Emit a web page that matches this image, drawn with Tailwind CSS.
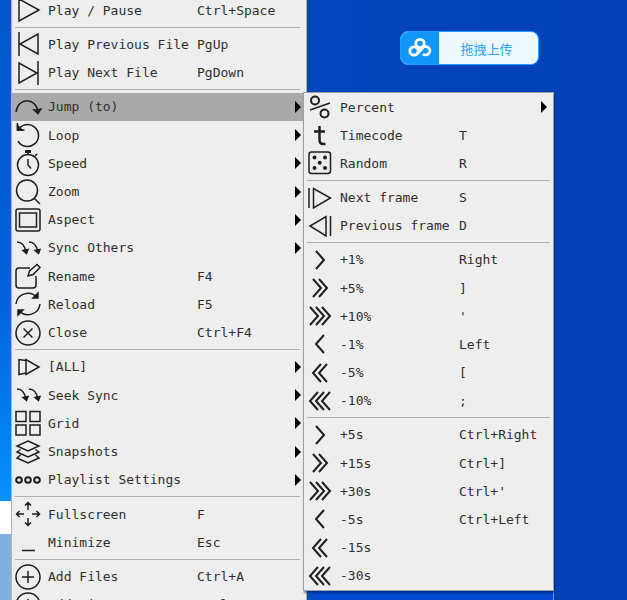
<!DOCTYPE html>
<html lang="en">
<head>
  <meta charset="UTF-8" />
  <title>Player Menu</title>
  <meta name="viewport" content="width=device-width, initial-scale=1.0" />
  <script src="https://cdn.jsdelivr.net/npm/@tailwindcss/browser@4"></script>
</head>
<body class="relative h-screen overflow-hidden bg-linear-to-r from-[#0446be] from-50% to-[#0340b6] font-['DejaVu_Sans_Mono',monospace] text-[13px] leading-none text-[#2e2e2e]">

  <!-- desktop strip left of the menu -->
  <div class="absolute inset-y-0 left-0 flex w-3 flex-col">
    <div class="grow bg-linear-to-b from-[#0055cc] via-[#0062dc] via-60% to-[#0a90ff]"></div>
    <div class="h-[33px] bg-white"></div>
    <div class="h-[66px] bg-[#7fb0e0]"></div>
  </div>

  <!-- brighter desktop edge under the submenu -->
  <div class="absolute bottom-0 left-[307px] h-3 w-[247px] border-r border-[#8c9cb4] bg-[#004ad0]"></div>

  <!-- upload widget -->
  <button class="absolute left-[400px] top-[31px] flex h-[34px] w-[139px] overflow-hidden rounded-lg border border-[#1c9cff] bg-[#eef9ff] font-['Noto_Sans_CJK_SC',sans-serif] text-[13px] text-[#2ba4f5]">
    <span class="flex h-full w-[38px] items-center justify-center bg-[#1296fb]">
      <svg class="size-6" viewBox="0 0 24 24" fill="none" stroke="#fff" stroke-width="2.8"><circle cx="12" cy="7.5" r="4.2"/><circle cx="6" cy="15" r="4.2"/><path d="M9 18l5.500-6a4.200 4.200 0 1 1 .5 6"/></svg>
    </span>
    <span class="flex h-full grow items-center justify-center pr-1">拖拽上传</span>
  </button>

  <div id="menu" role="menu" class="absolute -top-1 -bottom-[19px] left-[11px] flex w-[296px] flex-col border-x border-[#b4b4b4] bg-[#eeeeee] pr-[3px]"></div>
  <div id="submenu" role="menu" class="absolute top-[92px] bottom-[9px] left-[303px] flex w-[251px] flex-col border border-[#a0a0a0] bg-[#eeeeee] shadow-[1px_2px_2px_#00226699]"></div>

  <script>
    const icons = {
      play: '<path d="M5 3v22l20-11z"/>',
      prev: '<path d="M5 2v24M24 4v20L6 14z"/>',
      next: '<path d="M24 2v24M5 4v20l18-10z"/>',
      jump: '<path d="M2 19C4 4 22 4 24 19"/><path d="M20 17l4 3.500 3-4.500-3.500 1z" fill="currentColor"/>',
      loop: '<path d="M4 9a11 11 0 1 1 0 11"/><path d="M3.500 2v7h7"/><path d="M3.500 4.500V9H8z" fill="currentColor"/>',
      speed: '<circle cx="14" cy="16" r="10.500"/><path d="M14 10v6l3 3.500M14 2v4M21 7l2-2"/><path d="M11 2.500h6" stroke-width="3"/>',
      zoom: '<circle cx="13" cy="12.500" r="10.500"/><path d="M20 20l6 6"/>',
      aspect: '<rect x="2" y="3" width="24" height="22" rx="2"/><rect x="5.500" y="7" width="17" height="14"/>',
      sync: '<path d="M3 8c6 0 8 5 9 10M15 8c6 0 8 5 9 10"/><path d="M9 16.500l3.500 3L14 15.500zM21 16.500l3.500 3L26 15.500z" fill="currentColor"/>',
      rename: '<path d="M16 6H5a3 3 0 0 0-3 3v14a3 3 0 0 0 3 3h14a3 3 0 0 0 3-3V14"/><path d="M14 14l1.500-5 7.500-6.500 3 3L19 12.500z"/>',
      reload: '<path d="M2 14A12 12 0 0 1 23 7.500M26 14A12 12 0 0 1 5 20.500"/><path d="M24 3v5h-5zM4 25v-5h5z" fill="currentColor"/>',
      close: '<circle cx="14" cy="14" r="12"/><path d="M9.500 9.500l9 9M18.500 9.500l-9 9"/>',
      all: '<path d="M12 7.500L5 6.500v15l7-1.500M12 6.500v15L25 14z"/>',
      grid: '<path d="M2 2.500h10v10H2zM16 2.500h10v10H16zM2 16h10v10H2zM16 16h10v10H16z"/>',
      layers: '<path d="M14 3l11 5-11 5L3 8z"/><path d="M6.500 11.500L3 14l11 5 11-5-3.500-2.500M6.500 17L3 20l11 5 11-5-3.500-3"/>',
      dots: '<g stroke-width="2"><circle cx="5" cy="14" r="2.800"/><circle cx="14" cy="14" r="2.800"/><circle cx="23" cy="14" r="2.800"/></g>',
      full: '<path d="M14 10V3M11 5.500L14 2.500l3 3M14 18v7M11 22.500l3 3 3-3M10 14H3M5.500 11l-3 3 3 3M18 14h7M22.500 11l3 3-3 3"/>',
      min: '<path d="M8 22.500h13"/>',
      add: '<circle cx="14" cy="14" r="12"/><path d="M14 8v12M8 14h12"/>',
      percent: '<g stroke-width="2"><circle cx="9" cy="7.500" r="4"/><circle cx="18.500" cy="20.500" r="4"/></g><path d="M4 17l20-7"/>',
      t: '<path d="M13.500 5v14q0 4 4 4h2M8 10.500h11" stroke-width="2.500"/>',
      dice: '<rect x="3" y="3" width="21.500" height="21.500" rx="2.500"/><g fill="currentColor" stroke="none"><circle cx="8.500" cy="8.500" r="2"/><circle cx="19" cy="8.500" r="2"/><circle cx="13.700" cy="13.700" r="2"/><circle cx="8.500" cy="19" r="2"/><circle cx="19" cy="19" r="2"/></g>',
      stepf: '<path d="M3 4v20M7.500 4.500v19.500L24.500 14z"/>',
      stepb: '<path d="M24.500 4v20M20 4.500v19.500L4 14z"/>',
      r1: '<path d="M10 5l8 9-8 9" stroke-width="2"/>',
      r2: '<path d="M7 5l8 9-8 9M13 5l8 9-8 9" stroke-width="2"/>',
      r3: '<path d="M4 5l8 9-8 9M10 5l8 9-8 9M16 5l8 9-8 9" stroke-width="2"/>',
      l1: '<path d="M18 5l-8 9 8 9" stroke-width="2"/>',
      l2: '<path d="M15 5l-8 9 8 9M21 5l-8 9 8 9" stroke-width="2"/>',
      l3: '<path d="M12 5l-8 9 8 9M18 5l-8 9 8 9M24 5l-8 9 8 9" stroke-width="2"/>'
    };

    // [icon, label, shortcut, opens submenu, active]; null is a separator
    const menuItems = [
      ["play", "Play / Pause", "Ctrl+Space"],
      null,
      ["prev", "Play Previous File", "PgUp"],
      ["next", "Play Next File", "PgDown"],
      null,
      ["jump", "Jump (to)", "", true, true],
      ["loop", "Loop", "", true],
      ["speed", "Speed", "", true],
      ["zoom", "Zoom", "", true],
      ["aspect", "Aspect", "", true],
      ["sync", "Sync Others", "", true],
      ["rename", "Rename", "F4"],
      ["reload", "Reload", "F5"],
      ["close", "Close", "Ctrl+F4"],
      null,
      ["all", "[ALL]", "", true],
      ["sync", "Seek Sync", "", true],
      ["grid", "Grid", "", true],
      ["layers", "Snapshots", "", true],
      ["dots", "Playlist Settings", "", true],
      null,
      ["full", "Fullscreen", "F"],
      ["min", "Minimize", "Esc"],
      null,
      ["add", "Add Files", "Ctrl+A"],
      ["add", "Add Directory", "Ctrl+D"]
    ];

    const submenuItems = [
      ["percent", "Percent", "", true],
      ["t", "Timecode", "T"],
      ["dice", "Random", "R"],
      null,
      ["stepf", "Next frame", "S"],
      ["stepb", "Previous frame", "D"],
      null,
      ["r1", "+1%", "Right"],
      ["r2", "+5%", "]"],
      ["r3", "+10%", "'"],
      ["l1", "-1%", "Left"],
      ["l2", "-5%", "["],
      ["l3", "-10%", ";"],
      null,
      ["r1", "+5s", "Ctrl+Right"],
      ["r2", "+15s", "Ctrl+]"],
      ["r3", "+30s", "Ctrl+'"],
      ["l1", "-5s", "Ctrl+Left"],
      ["l2", "-15s", ""],
      ["l3", "-30s", ""]
    ];

    function fill(id, items, columns) {
      document.getElementById(id).innerHTML = items.map(item => {
        if (!item) return '<div role="separator" class="mx-[3px] flex h-[6px] shrink-0 items-center"><hr class="grow border-[#b0b0b0]" /></div>';
        const [icon, label, keys, opens, active] = item;
        const arrow = opens ? '<svg class="h-3 w-[6px]" viewBox="0 0 6 12"><path d="M0 0l6 6-6 6z" fill="#000"/></svg>' : '';
        return `<button role="menuitem" ${opens ? 'aria-haspopup="true"' : ''} class="grid ${columns} min-h-0 grow basis-0 items-center pl-0.5 pr-[2px] text-left whitespace-nowrap ${active ? 'bg-[#a9a9a9]' : ''}">
          <svg class="size-7 text-[#1e1e1e]" viewBox="0 0 28 28" fill="none" stroke="currentColor" stroke-width="1.500">${icons[icon]}</svg>
          <span>${label}</span><span>${keys}</span>${arrow}
        </button>`;
      }).join('');
    }

    fill("menu", menuItems, "grid-cols-[34px_149px_1fr_6px]");
    fill("submenu", submenuItems, "grid-cols-[34px_119px_1fr_10px]");
  </script>
</body>
</html>
